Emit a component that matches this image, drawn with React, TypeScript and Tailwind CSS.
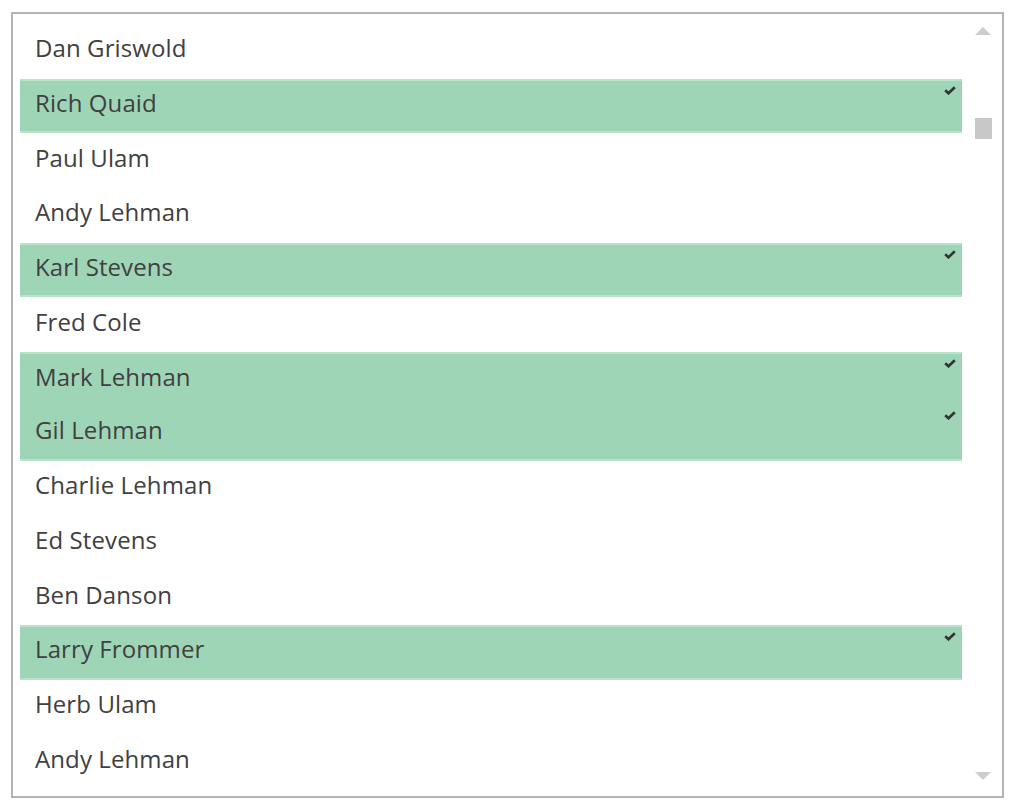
import React from "react";

type Person = { name: string; selected?: boolean };

const people: Person[] = [
  { name: "Dan Griswold" },
  { name: "Rich Quaid", selected: true },
  { name: "Paul Ulam" },
  { name: "Andy Lehman" },
  { name: "Karl Stevens", selected: true },
  { name: "Fred Cole" },
  { name: "Mark Lehman", selected: true },
  { name: "Gil Lehman", selected: true },
  { name: "Charlie Lehman" },
  { name: "Ed Stevens" },
  { name: "Ben Danson" },
  { name: "Larry Frommer", selected: true },
  { name: "Herb Ulam" },
  { name: "Andy Lehman" },
];

const Check = () => (
  <svg width="12" height="9" viewBox="0 0 12 9" className="absolute right-[6px] top-[5px]">
    <path d="M1.2 4.2 L4.5 7.3 L10.8 1.2" fill="none" stroke="#333" strokeWidth="2.6" />
  </svg>
);

export default function App() {
  return (
    <div className="min-h-[812px] bg-white pl-[11px] pt-[12px]" style={{ fontFamily: '"Open Sans", "Noto Sans", sans-serif' }}>
      <div className="flex h-[786px] w-[993px] border-2 border-[#b4b4b4] bg-white">
        <ul className="flex-1 pl-[7px] pt-[10px]">
          {people.map((p, i) => {
            const prevSel = people[i - 1]?.selected;
            const nextSel = people[i + 1]?.selected;
            return (
              <li
                key={i}
                className={
                  "relative flex h-[54.65px] items-center pl-[15px] text-[24px] tracking-[0.1px] text-[#404040] " +
                  (p.selected ? "bg-[#9fd5b7] " : "") +
                  (p.selected && !prevSel ? "border-t-2 border-t-[#b8e2ca] " : "") +
                  (p.selected && !nextSel ? "border-b-2 border-b-[#b8e2ca] " : "")
                }
              >
                <span className="-mt-[6px]">{p.name}</span>
                {p.selected && <Check />}
              </li>
            );
          })}
        </ul>
        <div className="relative flex w-[40px] flex-col items-center">
          <svg width="16" height="8" viewBox="0 0 16 8" className="mt-[13px] ml-[2px]">
            <path d="M0 8 L8 0 L16 8 Z" fill="#cdcdcd" />
          </svg>
          <div className="mt-[83px] ml-[2px] h-[21px] w-[17px] bg-[#c8c8c8]" />
          <div className="flex-1" />
          <svg width="16" height="8" viewBox="0 0 16 8" className="mb-[16px] ml-[2px]">
            <path d="M0 0 L16 0 L8 8 Z" fill="#cdcdcd" />
          </svg>
        </div>
      </div>
    </div>
  );
}
